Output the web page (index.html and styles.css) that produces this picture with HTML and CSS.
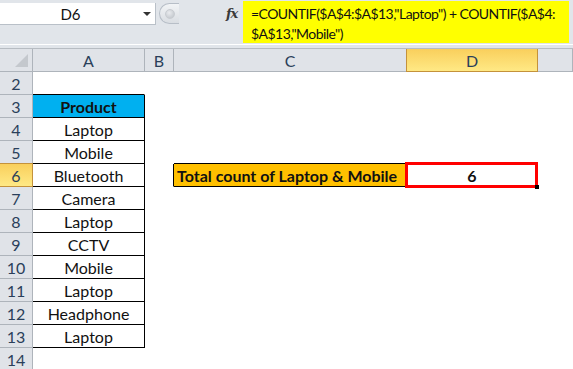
FILE: index.html
```html
<!DOCTYPE html>
<html>
<head>
<meta charset="utf-8">
<link rel="stylesheet" href="styles.css">
</head>
<body>
<div class="fbar">
  <div class="namecol">
    <div class="namebox"><span class="ref">D6</span><span class="arrow"></span></div>
  </div>
  <div class="knob"><span class="dot"></span></div>
  <div class="fx">fx</div>
  <div class="formula">=COUNTIF($A$4:$A$13,"Laptop") + COUNTIF($A$4:<br>$A$13,"Mobile")</div>
</div>
<div class="sep"></div>
<div class="sheet">
  <div class="hd corner"><span class="tri"></span></div>
  <div class="hd col">A</div>
  <div class="hd col">B</div>
  <div class="hd col">C</div>
  <div class="hd col sel">D</div>
  <div class="hd col"></div>

  <div class="hd row">2</div>
  <div class="c bb"></div><div class="c"></div><div class="c"></div><div class="c"></div><div class="c"></div>

  <div class="hd row">3</div>
  <div class="c t head">Product</div><div class="c"></div><div class="c"></div><div class="c"></div><div class="c"></div>

  <div class="hd row">4</div>
  <div class="c t">Laptop</div><div class="c"></div><div class="c"></div><div class="c"></div><div class="c"></div>

  <div class="hd row">5</div>
  <div class="c t">Mobile</div><div class="c"></div><div class="c bb"></div><div class="c"></div><div class="c"></div>

  <div class="hd row sel">6</div>
  <div class="c t">Bluetooth</div><div class="c br"></div><div class="c total">Total count of Laptop &amp; Mobile</div><div class="c active"><span class="val">6</span><span class="selbox"><span class="handle"></span></span></div><div class="c"></div>

  <div class="hd row">7</div>
  <div class="c t">Camera</div><div class="c"></div><div class="c"></div><div class="c"></div><div class="c"></div>

  <div class="hd row">8</div>
  <div class="c t">Laptop</div><div class="c"></div><div class="c"></div><div class="c"></div><div class="c"></div>

  <div class="hd row">9</div>
  <div class="c t">CCTV</div><div class="c"></div><div class="c"></div><div class="c"></div><div class="c"></div>

  <div class="hd row">10</div>
  <div class="c t">Mobile</div><div class="c"></div><div class="c"></div><div class="c"></div><div class="c"></div>

  <div class="hd row">11</div>
  <div class="c t">Laptop</div><div class="c"></div><div class="c"></div><div class="c"></div><div class="c"></div>

  <div class="hd row">12</div>
  <div class="c t">Headphone</div><div class="c"></div><div class="c"></div><div class="c"></div><div class="c"></div>

  <div class="hd row">13</div>
  <div class="c t">Laptop</div><div class="c"></div><div class="c"></div><div class="c"></div><div class="c"></div>

  <div class="hd row">14</div>
  <div class="c"></div><div class="c"></div><div class="c"></div><div class="c"></div><div class="c"></div>
</div>
</body>
</html>
```
FILE: styles.css
```css
html, body {
  margin: 0;
  padding: 0;
  background: #ffffff;
  overflow: hidden;
}
body {
  width: 573px;
  height: 369px;
  font-family: Lato, "Liberation Sans", sans-serif;
}
.fbar {
  height: 44px;
  background: #e1e5ea;
  display: flex;
  align-items: flex-start;
}
.namecol {
  width: 156px;
  height: 44px;
  padding-top: 3px;
  box-sizing: border-box;
  flex: none;
}
.namebox {
  height: 21px;
  background: #ffffff;
  border-right: 1px solid #b9c0c8;
  border-bottom: 1px solid #b9c0c8;
  position: relative;
  display: flex;
  align-items: center;
  justify-content: center;
}
.ref {
  font-size: 15px;
  color: #111;
  margin-left: -14px;
  margin-top: 1px;
}
.arrow {
  position: absolute;
  right: 4px;
  top: 9px;
  width: 0;
  height: 0;
  border-left: 4px solid transparent;
  border-right: 4px solid transparent;
  border-top: 4px solid #333;
}
.knob {
  flex: none;
  margin-top: 3px;
  margin-left: 3px;
  width: 20px;
  height: 21px;
  border: 1px solid #b7bec7;
  border-right: none;
  border-radius: 11px 0 0 11px;
  background: linear-gradient(#f2f4f6, #d9dde2);
  box-sizing: border-box;
  display: flex;
  align-items: center;
  padding-left: 5px;
}
.dot {
  width: 8px;
  height: 8px;
  border-radius: 50%;
  background: radial-gradient(circle at 40% 35%, #e9ebee, #bcc1c7);
  border: 1px solid #c8ccd1;
}
.fx {
  flex: none;
  margin-left: 47px;
  margin-top: 6px;
  width: 17px;
  font-family: "DejaVu Serif", "Liberation Serif", serif;
  font-style: italic;
  font-weight: bold;
  font-size: 13px;
  color: #3a3a3a;
  letter-spacing: -1px;
}
.formula {
  flex: none;
  margin-top: 1px;
  width: 326px;
  height: 42px;
  background: #ffff00;
  padding: 3px 0 0 8px;
  box-sizing: border-box;
  font-size: 14px;
  letter-spacing: -0.55px;
  line-height: 20px;
  color: #111;
  white-space: nowrap;
  overflow: hidden;
}
.sep {
  height: 5px;
  background: #e1e5ea;
  border-top: 1px solid #ffffff;
  box-sizing: border-box;
  border-bottom: 1px solid #b7bcc2;
}
.sheet {
  display: grid;
  grid-template-columns: 33px 112px 29px 233px 131px 35px;
  grid-template-rows: repeat(14, 23px);
  font-size: 16px;
}
.hd {
  background: #e0e3e8;
  border-right: 1px solid #aeb4bb;
  border-bottom: 1px solid #aeb4bb;
  color: #2a3f5a;
  display: flex;
  align-items: center;
  justify-content: center;
  box-sizing: border-box;
}
.hd.row {
  font-size: 16px;
}
.hd.col:last-child {
  border-right: none;
}
.hd.sel {
  background: linear-gradient(#f9cf5c, #ffe985);
  border-right: 1px solid #c4923b;
  border-bottom: 1px solid #c4923b;
  border-left: 1px solid #c4923b;
}
.hd.col.sel {
  margin-left: -1px;
}
.hd.row.sel {
  border-top: 1px solid #c4923b;
  margin-top: -1px;
  border-left: none;
}
.corner {
  position: relative;
}
.tri {
  position: absolute;
  right: 4px;
  bottom: 4px;
  width: 0;
  height: 0;
  border-left: 13px solid transparent;
  border-bottom: 13px solid #c4c8cd;
}
.c {
  border-right: 1px solid transparent;
  border-bottom: 1px solid transparent;
  box-sizing: border-box;
  display: flex;
  align-items: center;
  justify-content: center;
  color: #111;
  position: relative;
}
.c.bb {
  border-bottom-color: #000;
}
.c.br {
  border-right-color: #000;
}
.c.t {
  border-right-color: #000;
  border-bottom-color: #000;
}
.c.head {
  background: #00b0f0;
  font-weight: bold;
}
.c.total {
  background: #ffc000;
  border-right-color: #000;
  border-bottom-color: #000;
  justify-content: flex-start;
  padding-left: 3px;
  font-weight: bold;
  white-space: nowrap;
}
.c.active {
  font-weight: bold;
}
.selbox {
  position: absolute;
  left: -2px;
  top: -2px;
  right: -1px;
  bottom: -2px;
  border: 3px solid #ff0000;
}
.handle {
  position: absolute;
  right: -4px;
  bottom: -4px;
  width: 4px;
  height: 4px;
  background: #000;
}
```
